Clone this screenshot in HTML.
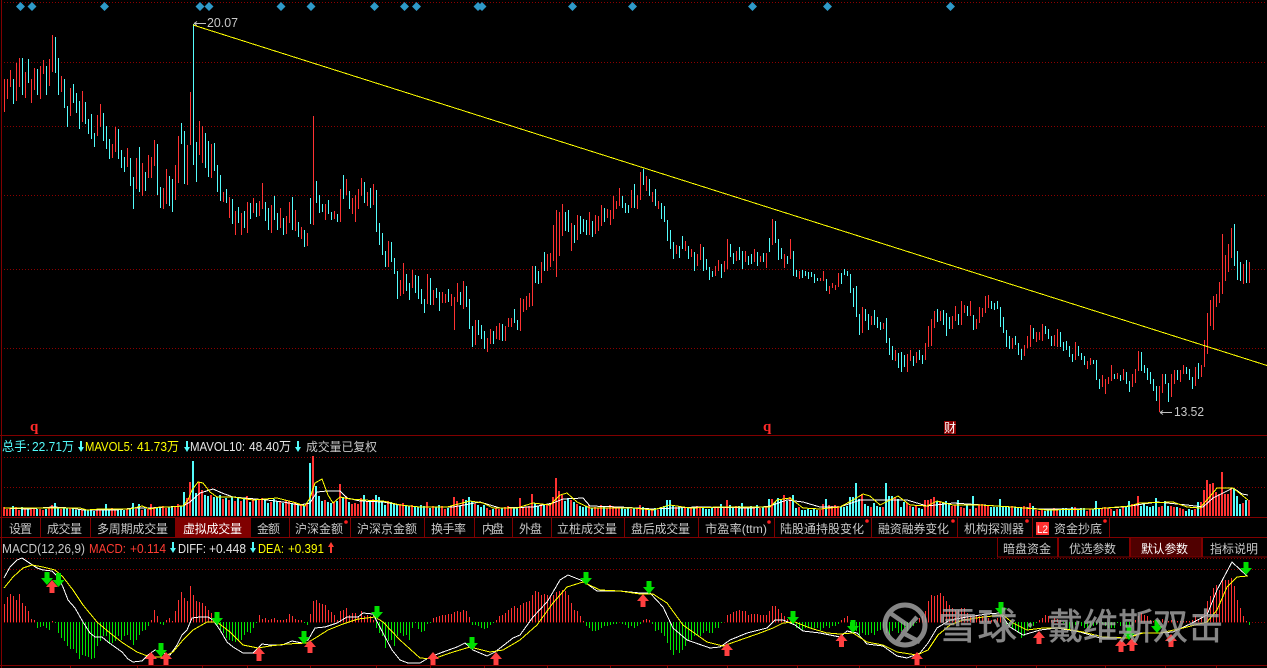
<!DOCTYPE html>
<html lang="zh"><head><meta charset="utf-8"><title>K线图</title>
<style>
html,body{margin:0;padding:0;background:#000;width:1267px;height:668px;overflow:hidden}
svg{display:block;position:absolute;left:0;top:0}
text{font-family:"Liberation Sans","Noto Sans CJK SC",sans-serif;font-size:12px;fill:#c8c8c8}
.h{font-size:13px}
.c{fill:#54fcfc}.y{fill:#ffff00}.w{fill:#e6e6e6}.r{fill:#ff3c32}
</style></head><body>
<svg width="1267" height="668" viewBox="0 0 1267 668" xmlns="http://www.w3.org/2000/svg">
<g fill="none" stroke="#8c0000" stroke-width="1" stroke-dasharray="1 2" shape-rendering="crispEdges">
<path d="M4 2.5H1267M4 62.5H1267M4 126.5H1267M4 195.5H1267M4 269.5H1267M4 348.5H1267M4 457.5H1267M4 487.5H1267M4 558.5H1267M4 569.5H1267M4 622.5H1267"/>
</g>
<g fill="none" stroke="#800000" stroke-width="1" shape-rendering="crispEdges">
<path d="M1.5 0V668M0 435.5H1267M0 517.5H1267M0 537.5H1267M0 665.5H1267"/>
<path d="M70.5 666v2M137.5 666v2M202.5 666v2M247.5 666v2M310.5 666v2M376.5 666v2M430.5 666v2M484.5 666v2M547.5 666v2M610.5 666v2M667.5 666v2M727.5 666v2M797.5 666v2M859.5 666v2M925.5 666v2M976.5 666v2M1036.5 666v2M1105.5 666v2M1165.5 666v2M1216.5 666v2"/>
</g>
<path fill="#2e9ac9" d="M20.5 2l4.5 4.5-4.5 4.5-4.5-4.5zM32 2l4.5 4.5-4.5 4.5-4.5-4.5zM104.5 2l4.5 4.5-4.5 4.5-4.5-4.5zM200 2l4.5 4.5-4.5 4.5-4.5-4.5zM209 2l4.5 4.5-4.5 4.5-4.5-4.5zM281 2l4.5 4.5-4.5 4.5-4.5-4.5zM311 2l4.5 4.5-4.5 4.5-4.5-4.5zM374.5 2l4.5 4.5-4.5 4.5-4.5-4.5zM404.5 2l4.5 4.5-4.5 4.5-4.5-4.5zM416.5 2l4.5 4.5-4.5 4.5-4.5-4.5zM478 2l4.5 4.5-4.5 4.5-4.5-4.5zM482 2l4.5 4.5-4.5 4.5-4.5-4.5zM572.5 2l4.5 4.5-4.5 4.5-4.5-4.5zM632.5 2l4.5 4.5-4.5 4.5-4.5-4.5zM752.5 2l4.5 4.5-4.5 4.5-4.5-4.5zM827.5 2l4.5 4.5-4.5 4.5-4.5-4.5zM950.5 2l4.5 4.5-4.5 4.5-4.5-4.5z"/>

<!-- candles red -->
<path fill="none" stroke="#ff3232" stroke-width="1" shape-rendering="crispEdges" d="M4.5 79V112M7.5 79V99M10.5 70V87M16.5 63V101M19.5 58V87M25.5 72V98M31.5 79V103M34.5 68V90M40.5 66V99M43.5 60V74M49.5 59V86M52.5 35V72M61.5 76V92M70.5 88V116M82.5 91V122M97.5 115V136M100.5 104V127M112.5 144V158M115.5 127V152M127.5 148V167M136.5 158V189M142.5 163V196M148.5 155V178M151.5 157V178M154.5 140V166M163.5 188V209M166.5 169V204M175.5 165V200M178.5 136V183M187.5 145V185M190.5 92V145M199.5 121V155M202.5 126V163M211.5 144V178M223.5 192V202M229.5 197V218M235.5 211V235M241.5 213V235M247.5 202V233M253.5 198V213M259.5 201V216M262.5 183V209M271.5 205V233M280.5 208V228M286.5 216V234M289.5 202V223M295.5 210V231M301.5 227V239M307.5 233V246M313.5 116V225M325.5 204V220M334.5 211V219M340.5 189V222M346.5 179V195M352.5 198V214M355.5 195V222M358.5 189V209M361.5 178V196M367.5 192V206M373.5 184V205M388.5 241V267M400.5 280V296M403.5 263V294M412.5 270V288M427.5 274V304M433.5 290V305M442.5 292V303M445.5 294V303M451.5 294V306M454.5 297V330M457.5 283V302M463.5 281V309M475.5 320V345M487.5 338V352M490.5 329V344M496.5 326V339M499.5 323V340M505.5 326V341M508.5 318V327M511.5 318V327M520.5 298V331M523.5 299V312M526.5 296V310M529.5 293V307M532.5 266V306M541.5 262V283M547.5 254V271M550.5 253V267M553.5 225V261M556.5 210V277M559.5 212V256M562.5 204V236M571.5 223V251M577.5 215V240M589.5 212V235M595.5 215V234M598.5 216V231M601.5 205V226M607.5 209V218M610.5 210V225M613.5 196V219M616.5 201V209M619.5 188V206M631.5 190V208M637.5 195V209M640.5 172V200M646.5 176V191M652.5 192V202M658.5 201V209M676.5 245V254M685.5 241V251M691.5 249V257M697.5 254V266M700.5 244V260M715.5 266V276M718.5 260V271M724.5 261V272M727.5 239V269M736.5 251V261M745.5 251V262M754.5 249V262M760.5 256V262M766.5 253V268M772.5 219V245M784.5 254V268M790.5 239V259M799.5 271V279M820.5 278V281M823.5 271V281M829.5 286V294M832.5 283V288M835.5 285V290M838.5 273V287M862.5 307V333M871.5 316V325M883.5 323V329M895.5 350V361M907.5 354V372M910.5 350V361M916.5 352V363M925.5 343V360M928.5 326V347M931.5 319V346M934.5 311V328M940.5 311V321M952.5 316V329M955.5 306V321M961.5 301V325M964.5 305V313M970.5 301V316M976.5 319V329M979.5 307V323M982.5 308V317M985.5 296V313M988.5 295V308M1012.5 338V349M1024.5 345V356M1027.5 336V348M1030.5 325V347M1036.5 332V342M1039.5 332V340M1042.5 324V341M1054.5 335V346M1057.5 329V347M1075.5 342V360M1087.5 361V369M1090.5 358V365M1102.5 375V387M1105.5 379V394M1108.5 377V384M1111.5 365V381M1117.5 373V379M1123.5 369V380M1132.5 374V387M1135.5 369V383M1138.5 351V371M1159.5 386V412M1162.5 374V393M1171.5 374V397M1174.5 370V384M1180.5 370V382M1183.5 365V374M1195.5 367V386M1201.5 365V377M1204.5 340V367M1207.5 313V354M1210.5 300V326M1213.5 296V330M1216.5 294V307M1219.5 282V303M1222.5 234V294M1225.5 255V281M1228.5 244V272M1231.5 228V258M1243.5 264V284M1249.5 262V283"/>
<!-- candles cyan -->
<path fill="none" stroke="#54fcfc" stroke-width="1" shape-rendering="crispEdges" d="M13.5 79V104M22.5 58V95M28.5 59V83M37.5 69V95M46.5 66V95M55.5 37V73M58.5 58V95M64.5 79V108M67.5 106V127M73.5 84V103M76.5 93V113M79.5 101V129M85.5 102V124M88.5 119V134M91.5 114V139M94.5 133V147M103.5 113V141M106.5 126V149M109.5 139V159M118.5 129V159M121.5 150V168M124.5 157V172M130.5 158V186M133.5 177V209M139.5 147V192M145.5 172V191M157.5 144V195M160.5 187V208M169.5 176V206M172.5 179V212M181.5 123V144M184.5 131V184M193.5 24V165M196.5 142V182M205.5 133V168M208.5 141V177M214.5 143V171M217.5 165V192M220.5 175V201M226.5 189V203M232.5 199V224M238.5 207V223M244.5 211V228M250.5 203V219M256.5 203V217M265.5 202V221M268.5 208V230M274.5 196V220M277.5 213V230M283.5 218V235M292.5 197V230M298.5 222V237M304.5 230V247M310.5 198V224M316.5 181V203M319.5 195V213M322.5 204V212M328.5 200V214M331.5 212V220M337.5 214V222M343.5 175V199M349.5 191V209M364.5 182V203M370.5 188V208M376.5 190V232M379.5 223V245M382.5 233V255M385.5 251V267M391.5 242V262M394.5 258V274M397.5 271V299M406.5 274V291M409.5 283V300M415.5 275V293M418.5 276V299M421.5 289V304M424.5 299V313M430.5 278V305M436.5 288V298M439.5 292V311M448.5 289V302M460.5 292V305M466.5 286V307M469.5 299V329M472.5 326V347M478.5 320V335M481.5 325V339M484.5 331V349M493.5 331V344M502.5 324V341M514.5 309V323M517.5 320V330M535.5 266V283M538.5 271V284M544.5 252V271M565.5 212V231M568.5 210V232M574.5 225V243M580.5 216V234M583.5 219V232M586.5 220V235M592.5 221V237M604.5 208V222M622.5 196V208M625.5 203V213M628.5 205V213M634.5 184V208M643.5 169V185M649.5 179V196M655.5 189V206M661.5 203V219M664.5 206V222M667.5 220V241M670.5 230V249M673.5 242V259M679.5 246V258M682.5 236V249M688.5 246V259M694.5 252V271M703.5 247V271M706.5 259V270M709.5 267V280M712.5 271V277M721.5 264V278M730.5 244V257M733.5 253V264M739.5 247V260M742.5 251V269M748.5 256V265M751.5 254V264M757.5 252V266M763.5 253V262M769.5 238V252M775.5 221V243M778.5 239V260M781.5 248V259M787.5 256V264M793.5 251V276M796.5 270V277M802.5 270V278M805.5 271V276M808.5 272V279M811.5 272V277M814.5 274V283M817.5 278V281M826.5 279V291M841.5 273V284M844.5 269V275M847.5 271V276M850.5 274V293M853.5 288V307M856.5 286V317M859.5 314V335M865.5 309V321M868.5 314V330M874.5 310V325M877.5 317V328M880.5 322V330M886.5 318V343M889.5 338V355M892.5 346V360M898.5 353V368M901.5 352V372M904.5 355V367M913.5 356V366M919.5 350V360M922.5 355V364M937.5 309V322M943.5 310V325M946.5 313V336M949.5 317V329M958.5 314V325M967.5 306V316M973.5 315V330M991.5 301V309M994.5 303V310M997.5 301V309M1000.5 307V327M1003.5 317V333M1006.5 330V347M1009.5 336V349M1015.5 336V345M1018.5 343V355M1021.5 349V360M1033.5 328V339M1045.5 326V334M1048.5 329V339M1051.5 336V346M1060.5 332V347M1063.5 342V351M1066.5 341V350M1069.5 346V357M1072.5 354V362M1078.5 346V356M1081.5 353V360M1084.5 356V365M1093.5 360V364M1096.5 360V380M1099.5 379V389M1114.5 374V379M1120.5 375V381M1126.5 372V384M1129.5 381V392M1141.5 352V371M1144.5 365V373M1147.5 368V380M1150.5 372V384M1153.5 379V391M1156.5 386V401M1165.5 374V384M1168.5 383V402M1177.5 370V380M1186.5 367V374M1189.5 369V380M1192.5 377V389M1198.5 363V379M1234.5 224V266M1237.5 251V280M1240.5 262V281M1246.5 260V283"/>

<!-- trend line -->
<path d="M193 25L1267 365.5" stroke="#ffff00" stroke-width="1" fill="none" shape-rendering="crispEdges"/>
<path d="M194 23.5H206M194 23.5l3-2M194 23.5l3 2M1160 412.5H1172M1160 412.5l3-2M1160 412.5l3 2" stroke="#c0c0c0" stroke-width="1" fill="none"/>
<text x="207" y="27" class="h" textLength="31" lengthAdjust="spacingAndGlyphs">20.07</text>
<text x="1174" y="416" class="h" textLength="30" lengthAdjust="spacingAndGlyphs">13.52</text>
<text x="30" y="431" style="font-family:'Liberation Serif',serif;font-size:15px;font-weight:bold;fill:#ff2a2a">q</text>
<text x="763" y="431" style="font-family:'Liberation Serif',serif;font-size:15px;font-weight:bold;fill:#ff2a2a">q</text>
<rect x="944" y="421" width="12" height="13" fill="#8b0000"/>
<text x="944" y="432" style="fill:#fff;font-size:12px">财</text>

<!-- volume header -->
<text x="2" y="451" class="c h" textLength="28" lengthAdjust="spacingAndGlyphs">总手:</text>
<text x="32" y="451" class="c h" textLength="42" lengthAdjust="spacingAndGlyphs">22.71万</text>
<text x="85" y="451" class="y h" textLength="48" lengthAdjust="spacingAndGlyphs">MAVOL5:</text>
<text x="137" y="451" class="y h" textLength="42" lengthAdjust="spacingAndGlyphs">41.73万</text>
<text x="190" y="451" class="w h" textLength="55" lengthAdjust="spacingAndGlyphs">MAVOL10:</text>
<text x="249" y="451" class="w h" textLength="42" lengthAdjust="spacingAndGlyphs">48.40万</text>
<text x="306" y="451" textLength="71" lengthAdjust="spacingAndGlyphs">成交量已复权</text>
<path fill="#54fcfc" d="M80 441h2v6h2l-3 5-3-5h2zM186 441h2v6h2l-3 5-3-5h2zM297 441h2v6h2l-3 5-3-5h2z"/>

<!-- volume red -->
<path fill="none" stroke="#ff3232" stroke-width="2" shape-rendering="crispEdges" d="M4 516v-9M7 516v-7M10 516v-8M16 516v-9M19 516v-6M25 516v-7M31 516v-7M34 516v-8M40 516v-7M43 516v-6M49 516v-8M52 516v-11M61 516v-7M70 516v-8M82 516v-6M97 516v-6M100 516v-6M112 516v-8M115 516v-7M127 516v-7M136 516v-7M142 516v-6M148 516v-7M151 516v-12M154 516v-9M163 516v-10M166 516v-8M175 516v-10M178 516v-12M187 516v-18M190 516v-34M199 516v-34M202 516v-26M211 516v-21M223 516v-17M229 516v-16M235 516v-15M241 516v-15M247 516v-20M253 516v-17M259 516v-16M262 516v-18M271 516v-14M280 516v-14M286 516v-16M289 516v-15M295 516v-14M301 516v-11M307 516v-12M313 516v-60M325 516v-16M334 516v-14M340 516v-32M346 516v-20M352 516v-12M355 516v-13M358 516v-12M361 516v-18M367 516v-14M373 516v-17M388 516v-15M400 516v-12M403 516v-13M412 516v-11M427 516v-14M433 516v-10M442 516v-10M445 516v-7M451 516v-9M454 516v-19M457 516v-15M463 516v-17M475 516v-12M487 516v-8M490 516v-6M496 516v-8M499 516v-7M505 516v-9M508 516v-10M511 516v-8M520 516v-18M523 516v-9M526 516v-9M529 516v-10M532 516v-22M541 516v-12M547 516v-12M550 516v-11M553 516v-19M556 516v-38M559 516v-25M562 516v-21M571 516v-16M577 516v-12M589 516v-11M595 516v-9M598 516v-8M601 516v-11M607 516v-8M610 516v-11M613 516v-10M616 516v-8M619 516v-9M631 516v-7M637 516v-7M640 516v-11M646 516v-8M652 516v-6M658 516v-6M676 516v-9M685 516v-8M691 516v-8M697 516v-10M700 516v-8M715 516v-9M718 516v-8M724 516v-9M727 516v-16M736 516v-10M745 516v-9M754 516v-9M760 516v-8M766 516v-10M772 516v-17M784 516v-21M790 516v-19M799 516v-9M820 516v-6M823 516v-12M829 516v-11M832 516v-10M835 516v-11M838 516v-10M862 516v-22M871 516v-9M883 516v-9M895 516v-19M907 516v-13M910 516v-10M916 516v-10M925 516v-16M928 516v-16M931 516v-17M934 516v-19M940 516v-15M952 516v-10M955 516v-11M961 516v-9M964 516v-8M970 516v-7M976 516v-8M979 516v-12M982 516v-12M985 516v-10M988 516v-10M1012 516v-10M1024 516v-10M1027 516v-9M1030 516v-13M1036 516v-6M1039 516v-5M1042 516v-6M1054 516v-8M1057 516v-7M1075 516v-9M1087 516v-5M1090 516v-7M1102 516v-8M1105 516v-9M1108 516v-8M1111 516v-7M1117 516v-7M1123 516v-9M1132 516v-12M1135 516v-12M1138 516v-20M1159 516v-9M1162 516v-10M1171 516v-10M1174 516v-9M1180 516v-8M1183 516v-7M1195 516v-7M1201 516v-14M1204 516v-26M1207 516v-36M1210 516v-32M1213 516v-33M1216 516v-24M1219 516v-22M1222 516v-44M1225 516v-22M1228 516v-22M1231 516v-28M1243 516v-13M1249 516v-16"/>
<!-- volume cyan -->
<path fill="none" stroke="#54fcfc" stroke-width="2" shape-rendering="crispEdges" d="M13 516v-10M22 516v-9M28 516v-7M37 516v-7M46 516v-7M55 516v-13M58 516v-9M64 516v-9M67 516v-8M73 516v-7M76 516v-6M79 516v-7M85 516v-6M88 516v-6M91 516v-6M94 516v-5M103 516v-7M106 516v-12M109 516v-7M118 516v-6M121 516v-7M124 516v-6M130 516v-8M133 516v-13M139 516v-12M145 516v-7M157 516v-8M160 516v-9M169 516v-9M172 516v-9M181 516v-10M184 516v-24M193 516v-55M196 516v-23M205 516v-21M208 516v-20M214 516v-19M217 516v-19M220 516v-21M226 516v-18M232 516v-19M238 516v-18M244 516v-17M250 516v-14M256 516v-16M265 516v-16M268 516v-13M274 516v-17M277 516v-15M283 516v-13M292 516v-13M298 516v-12M304 516v-10M310 516v-53M316 516v-30M319 516v-20M322 516v-15M328 516v-14M331 516v-13M337 516v-15M343 516v-18M349 516v-14M364 516v-21M370 516v-16M376 516v-21M379 516v-19M382 516v-14M385 516v-11M391 516v-14M394 516v-13M397 516v-11M406 516v-11M409 516v-10M415 516v-10M418 516v-9M421 516v-11M424 516v-10M430 516v-8M436 516v-9M439 516v-11M448 516v-8M460 516v-10M466 516v-16M469 516v-19M472 516v-15M478 516v-11M481 516v-9M484 516v-11M493 516v-7M502 516v-8M514 516v-9M517 516v-9M535 516v-13M538 516v-10M544 516v-11M565 516v-15M568 516v-18M574 516v-14M580 516v-10M583 516v-9M586 516v-10M592 516v-8M604 516v-9M622 516v-8M625 516v-7M628 516v-9M634 516v-8M643 516v-9M649 516v-7M655 516v-8M661 516v-9M664 516v-10M667 516v-16M670 516v-16M673 516v-11M679 516v-10M682 516v-9M688 516v-8M694 516v-9M703 516v-8M706 516v-7M709 516v-7M712 516v-8M721 516v-12M730 516v-11M733 516v-9M739 516v-10M742 516v-13M748 516v-9M751 516v-10M757 516v-11M763 516v-9M769 516v-17M775 516v-14M778 516v-18M781 516v-17M787 516v-15M793 516v-21M796 516v-8M802 516v-6M805 516v-6M808 516v-7M811 516v-6M814 516v-7M817 516v-6M826 516v-17M841 516v-9M844 516v-9M847 516v-10M850 516v-19M853 516v-19M856 516v-33M859 516v-17M865 516v-12M868 516v-10M874 516v-13M877 516v-10M880 516v-9M886 516v-33M889 516v-20M892 516v-20M898 516v-17M901 516v-9M904 516v-14M913 516v-9M919 516v-8M922 516v-7M937 516v-15M943 516v-14M946 516v-15M949 516v-13M958 516v-16M967 516v-11M973 516v-20M991 516v-9M994 516v-9M997 516v-9M1000 516v-17M1003 516v-10M1006 516v-9M1009 516v-9M1015 516v-9M1018 516v-9M1021 516v-8M1033 516v-10M1045 516v-5M1048 516v-6M1051 516v-6M1060 516v-7M1063 516v-8M1066 516v-8M1069 516v-6M1072 516v-9M1078 516v-7M1081 516v-8M1084 516v-8M1093 516v-7M1096 516v-15M1099 516v-8M1114 516v-5M1120 516v-7M1126 516v-10M1129 516v-15M1141 516v-10M1144 516v-13M1147 516v-10M1150 516v-9M1153 516v-10M1156 516v-18M1165 516v-15M1168 516v-10M1177 516v-9M1186 516v-5M1189 516v-7M1192 516v-6M1198 516v-14M1234 516v-27M1237 516v-20M1240 516v-12M1246 516v-16"/>
<!-- volume MA -->
<polyline fill="none" stroke="#ffffff" stroke-width="1" shape-rendering="crispEdges" points="4,508 27,509 53,507 70,508 83,510 117,510 133,508 150,508 167,507 183,506 190,502 200,493 213,489 222,493 233,497 267,500 283,502 300,505 310,503 317,492 327,491 340,491 347,498 360,501 383,502 400,505 420,507 453,507 480,502 500,508 533,507 553,503 563,499 583,498 590,506 620,507 653,509 697,507 753,508 770,506 787,500 803,502 820,507 840,507 860,500 877,500 907,500 927,506 953,503 997,506 1040,509 1090,509 1123,507 1157,502 1187,505 1203,507 1213,498 1233,488 1242,494 1248,495"/>
<polyline fill="none" stroke="#ffff00" stroke-width="1" shape-rendering="crispEdges" points="4,508 33,508 53,508 68,508 80,508 87,510 100,509 113,509 130,509 142,506 150,509 160,507 170,507 183,506 188,500 192,490 198,482 203,483 210,492 217,497 233,497 253,500 277,498 293,502 305,506 310,498 315,483 322,479 328,495 333,503 340,497 350,499 363,500 383,501 400,505 420,507 447,507 470,501 483,503 493,508 517,508 533,503 550,505 560,495 567,493 577,502 590,508 610,508 633,508 653,510 670,505 690,508 720,507 737,507 757,507 770,507 777,500 790,498 803,508 820,509 840,507 853,500 863,494 870,496 880,505 898,496 910,505 927,506 937,501 953,505 980,505 1013,507 1047,510 1093,509 1130,506 1140,503 1173,502 1187,507 1200,508 1207,500 1217,488 1233,488 1248,500"/>

<!-- tabs -->
<rect x="176" y="518" width="74" height="19" fill="#800000"/>
<path fill="none" stroke="#800000" stroke-width="1" shape-rendering="crispEdges" d="M40.5 518V537M90.5 518V537M175.5 518V537M250.5 518V537M289.5 518V537M350.5 518V537M424.5 518V537M474.5 518V537M512.5 518V537M551.5 518V537M624.5 518V537M698.5 518V537M774.5 518V537M871.5 518V537M957.5 518V537M1032.5 518V537M1109.5 518V537"/>
<text x="9" y="533" textLength="23">设置</text>
<text x="47" y="533" textLength="35">成交量</text>
<text x="97" y="533" textLength="71">多周期成交量</text>
<text x="183" y="533" textLength="59" style="fill:#fff">虚拟成交量</text>
<text x="257" y="533" textLength="23">金额</text>
<text x="295" y="533" textLength="48">沪深金额</text>
<text x="357" y="533" textLength="60">沪深京金额</text>
<text x="431" y="533" textLength="35">换手率</text>
<text x="482" y="533" textLength="22">内盘</text>
<text x="519" y="533" textLength="23">外盘</text>
<text x="557" y="533" textLength="60">立桩成交量</text>
<text x="631" y="533" textLength="59">盘后成交量</text>
<text x="705" y="533" textLength="62" lengthAdjust="spacingAndGlyphs">市盈率(ttm)</text>
<text x="780" y="533" textLength="84">陆股通持股变化</text>
<text x="878" y="533" textLength="71">融资融券变化</text>
<text x="964" y="533" textLength="60">机构探测器</text>
<rect x="1036" y="522" width="13" height="13" fill="#ff3030"/>
<text x="1037" y="533" style="fill:#fff;font-size:11px" textLength="11" lengthAdjust="spacingAndGlyphs">L2</text>
<text x="1054" y="533" textLength="48">资金抄底</text>
<g fill="#ff1e1e"><circle cx="346" cy="522" r="1.8"/><circle cx="769" cy="522" r="1.8"/><circle cx="867" cy="521" r="1.8"/><circle cx="953" cy="521" r="1.8"/><circle cx="1027" cy="521" r="1.8"/><circle cx="1105" cy="521" r="1.8"/></g>

<!-- MACD header -->
<text x="2" y="553" class="h" textLength="83" lengthAdjust="spacingAndGlyphs">MACD(12,26,9)</text>
<text x="89" y="553" class="r h" textLength="37" lengthAdjust="spacingAndGlyphs">MACD:</text>
<text x="130" y="553" class="r h" textLength="36" lengthAdjust="spacingAndGlyphs">+0.114</text>
<text x="178" y="553" class="w h" textLength="28" lengthAdjust="spacingAndGlyphs">DIFF:</text>
<text x="209" y="553" class="w h" textLength="37" lengthAdjust="spacingAndGlyphs">+0.448</text>
<text x="258" y="553" class="y h" textLength="26" lengthAdjust="spacingAndGlyphs">DEA:</text>
<text x="288" y="553" class="y h" textLength="36" lengthAdjust="spacingAndGlyphs">+0.391</text>
<path fill="#54fcfc" d="M172 542h2v6h2l-3 5-3-5h2zM252 542h2v6h2l-3 5-3-5h2z"/>
<path fill="#ff3c32" d="M330 553h2v-6h2l-3-5-3 5h2z"/>

<!-- buttons -->
<rect x="1130" y="538" width="71" height="19" fill="#500000"/>
<path fill="none" stroke="#800000" stroke-width="1" shape-rendering="crispEdges" d="M997.5 538V557H1267M1057.5 538V557M1058.5 538V557M1129.5 538V557M1130.5 538V557M1201.5 538V557M1202.5 538V557"/>
<text x="1003" y="553" textLength="48">暗盘资金</text>
<text x="1069" y="553" textLength="47">优选参数</text>
<text x="1141" y="553" textLength="47" style="fill:#fff">默认参数</text>
<text x="1210" y="553" textLength="48">指标说明</text>

<!-- MACD red hist -->
<path fill="none" stroke="#ff3232" stroke-width="1" shape-rendering="crispEdges" d="M4.5 622v-18M7.5 622v-25M10.5 622v-28M13.5 622v-26M16.5 622v-22M19.5 622v-28M22.5 622v-19M25.5 622v-16M28.5 622v-11M31.5 622v-3M34.5 622v-2M52.5 622v-1M151.5 622v-2M154.5 622v-12M157.5 622v-6M166.5 622v-2M169.5 622v-4M172.5 622v-1M175.5 622v-11M178.5 622v-22M181.5 622v-30M184.5 622v-24M187.5 622v-21M190.5 622v-36M193.5 622v-27M196.5 622v-21M199.5 622v-20M202.5 622v-19M205.5 622v-16M208.5 622v-12M211.5 622v-9M214.5 622v-2M259.5 622v-7M262.5 622v-3M265.5 622v-4M268.5 622v-2M271.5 622v-3M274.5 622v-4M277.5 622v-2M280.5 622v-2M283.5 622v-2M286.5 622v-3M289.5 622v-8M292.5 622v-6M295.5 622v-3M298.5 622v-2M301.5 622v-2M310.5 622v-8M313.5 622v-21M316.5 622v-22M319.5 622v-19M322.5 622v-18M325.5 622v-17M328.5 622v-12M331.5 622v-10M334.5 622v-7M337.5 622v-2M340.5 622v-11M343.5 622v-12M346.5 622v-14M349.5 622v-7M352.5 622v-9M355.5 622v-9M358.5 622v-6M361.5 622v-11M364.5 622v-6M367.5 622v-7M370.5 622v-6M373.5 622v-2M433.5 622v-4M436.5 622v-5M439.5 622v-6M442.5 622v-7M445.5 622v-7M448.5 622v-8M451.5 622v-8M454.5 622v-10M457.5 622v-11M460.5 622v-10M463.5 622v-12M466.5 622v-11M469.5 622v-5M496.5 622v-2M499.5 622v-6M502.5 622v-7M505.5 622v-9M508.5 622v-12M511.5 622v-14M514.5 622v-16M517.5 622v-14M520.5 622v-17M523.5 622v-19M526.5 622v-20M529.5 622v-21M532.5 622v-27M535.5 622v-31M538.5 622v-30M541.5 622v-27M544.5 622v-28M547.5 622v-27M550.5 622v-26M553.5 622v-27M556.5 622v-30M559.5 622v-31M562.5 622v-32M565.5 622v-31M568.5 622v-27M571.5 622v-19M574.5 622v-12M577.5 622v-11M580.5 622v-6M583.5 622v-1M643.5 622v-2M646.5 622v-3M649.5 622v-2M727.5 622v-7M730.5 622v-8M733.5 622v-10M736.5 622v-11M739.5 622v-12M742.5 622v-11M745.5 622v-11M748.5 622v-7M751.5 622v-8M754.5 622v-8M757.5 622v-8M760.5 622v-7M763.5 622v-7M766.5 622v-7M769.5 622v-11M772.5 622v-16M775.5 622v-16M778.5 622v-13M781.5 622v-9M784.5 622v-6M787.5 622v-3M790.5 622v-1M841.5 622v-2M844.5 622v-4M847.5 622v-6M919.5 622v-4M922.5 622v-6M925.5 622v-11M928.5 622v-21M931.5 622v-27M934.5 622v-26M937.5 622v-27M940.5 622v-29M943.5 622v-26M946.5 622v-21M949.5 622v-17M952.5 622v-14M955.5 622v-12M958.5 622v-12M961.5 622v-14M964.5 622v-14M967.5 622v-9M970.5 622v-7M973.5 622v-6M976.5 622v-7M979.5 622v-6M982.5 622v-6M985.5 622v-6M988.5 622v-4M991.5 622v-2M994.5 622v-2M997.5 622v-4M1000.5 622v-6M1039.5 622v-2M1042.5 622v-4M1045.5 622v-7M1048.5 622v-6M1051.5 622v-2M1054.5 622v-4M1057.5 622v-3M1060.5 622v-2M1135.5 622v-2M1138.5 622v-6M1141.5 622v-9M1144.5 622v-7M1147.5 622v-6M1150.5 622v-2M1153.5 622v-1M1156.5 622v-1M1159.5 622v-2M1162.5 622v-3M1165.5 622v-1M1168.5 622v-1M1171.5 622v-2M1174.5 622v-2M1177.5 622v-1M1180.5 622v-1M1183.5 622v-1M1186.5 622v-1M1189.5 622v-1M1192.5 622v-2M1195.5 622v-6M1198.5 622v-2M1201.5 622v-6M1204.5 622v-9M1207.5 622v-21M1210.5 622v-26M1213.5 622v-34M1216.5 622v-37M1219.5 622v-32M1222.5 622v-42M1225.5 622v-42M1228.5 622v-42M1231.5 622v-44M1234.5 622v-36M1237.5 622v-22M1240.5 622v-14M1243.5 622v-6M1246.5 622v-1"/>
<!-- MACD green hist -->
<path fill="none" stroke="#00e600" stroke-width="1" shape-rendering="crispEdges" d="M37.5 622v6M40.5 622v5M43.5 622v4M46.5 622v6M49.5 622v8M55.5 622v1M58.5 622v11M61.5 622v16M64.5 622v19M67.5 622v24M70.5 622v27M73.5 622v27M76.5 622v31M79.5 622v37M82.5 622v33M85.5 622v34M88.5 622v35M91.5 622v37M94.5 622v36M97.5 622v24M100.5 622v19M103.5 622v14M106.5 622v14M109.5 622v22M112.5 622v21M115.5 622v19M118.5 622v14M121.5 622v18M124.5 622v14M127.5 622v13M130.5 622v18M133.5 622v23M136.5 622v18M139.5 622v13M142.5 622v9M145.5 622v8M148.5 622v4M160.5 622v2M163.5 622v3M217.5 622v3M220.5 622v8M223.5 622v11M226.5 622v16M229.5 622v18M232.5 622v19M235.5 622v20M238.5 622v19M241.5 622v18M244.5 622v13M247.5 622v10M250.5 622v11M253.5 622v6M256.5 622v1M304.5 622v1M307.5 622v3M376.5 622v6M379.5 622v11M382.5 622v14M385.5 622v26M388.5 622v19M391.5 622v18M394.5 622v24M397.5 622v14M400.5 622v11M403.5 622v14M406.5 622v13M409.5 622v18M412.5 622v6M415.5 622v1M418.5 622v7M421.5 622v10M424.5 622v9M427.5 622v2M430.5 622v1M472.5 622v3M475.5 622v3M478.5 622v4M481.5 622v6M484.5 622v7M487.5 622v6M490.5 622v3M493.5 622v1M586.5 622v4M589.5 622v6M592.5 622v9M595.5 622v9M598.5 622v8M601.5 622v6M604.5 622v4M607.5 622v4M610.5 622v3M613.5 622v2M616.5 622v2M622.5 622v2M625.5 622v3M628.5 622v6M631.5 622v4M634.5 622v6M637.5 622v4M640.5 622v2M652.5 622v2M655.5 622v9M658.5 622v8M661.5 622v11M664.5 622v14M667.5 622v21M670.5 622v28M673.5 622v33M676.5 622v28M679.5 622v31M682.5 622v28M685.5 622v24M688.5 622v19M691.5 622v18M694.5 622v14M697.5 622v13M700.5 622v14M703.5 622v11M706.5 622v9M709.5 622v11M712.5 622v11M715.5 622v6M718.5 622v6M721.5 622v1M793.5 622v3M796.5 622v6M799.5 622v6M802.5 622v8M805.5 622v6M808.5 622v6M811.5 622v6M814.5 622v6M817.5 622v6M820.5 622v8M823.5 622v6M826.5 622v4M829.5 622v6M832.5 622v4M835.5 622v4M838.5 622v2M850.5 622v6M853.5 622v6M856.5 622v9M859.5 622v13M862.5 622v11M865.5 622v13M868.5 622v13M871.5 622v11M874.5 622v13M877.5 622v9M880.5 622v8M883.5 622v6M886.5 622v11M889.5 622v13M892.5 622v9M895.5 622v6M898.5 622v11M901.5 622v9M904.5 622v6M907.5 622v9M910.5 622v6M913.5 622v4M916.5 622v1M1003.5 622v1M1006.5 622v3M1009.5 622v4M1012.5 622v6M1015.5 622v8M1018.5 622v11M1021.5 622v16M1024.5 622v14M1027.5 622v8M1030.5 622v6M1033.5 622v4M1036.5 622v1M1063.5 622v1M1066.5 622v6M1069.5 622v8M1072.5 622v6M1075.5 622v3M1078.5 622v2M1081.5 622v4M1084.5 622v6M1087.5 622v6M1090.5 622v6M1093.5 622v4M1096.5 622v3M1099.5 622v1M1102.5 622v2M1105.5 622v4M1108.5 622v6M1111.5 622v6M1114.5 622v6M1117.5 622v1M1120.5 622v4M1123.5 622v4M1126.5 622v6M1129.5 622v6M1132.5 622v4M1249.5 622v3"/>
<!-- MACD lines -->
<polyline fill="none" stroke="#ffffff" stroke-width="1" shape-rendering="crispEdges" points="4,578 10,567 17,560 22,558 28,562 37,568 43,570 52,571 58,577 63,587 68,600 75,608 83,622 90,633 95,637 102,637 108,642 115,647 122,652 128,659 133,662 142,661 148,655 155,650 163,653 170,655 177,645 182,635 187,630 192,618 200,617 208,617 213,620 220,630 227,642 233,647 243,653 253,653 262,644 270,645 282,645 292,641 302,643 308,640 315,628 325,627 337,623 347,617 358,617 363,613 373,614 383,633 392,650 400,660 408,663 420,663 430,657 443,652 457,647 465,643 473,650 487,656 495,652 513,638 520,635 533,617 547,602 553,592 560,580 568,575 583,581 597,591 620,591 640,593 650,593 663,607 673,628 687,640 710,648 720,647 730,640 747,633 767,628 775,620 783,620 795,625 803,631 820,633 840,637 847,631 857,633 867,644 883,646 897,656 907,658 920,653 928,643 937,628 950,620 967,617 987,614 1000,613 1010,627 1023,635 1040,630 1057,628 1080,632 1100,638 1127,638 1140,633 1160,633 1173,632 1190,624 1207,615 1217,590 1232,562 1247,576"/>
<polyline fill="none" stroke="#ffff00" stroke-width="1" shape-rendering="crispEdges" points="4,588 13,577 23,568 32,565 43,567 55,570 63,577 73,590 83,605 97,622 110,633 123,643 137,652 150,657 163,657 173,652 183,640 193,630 207,622 217,622 230,632 243,645 258,648 270,646 287,644 307,643 317,637 328,630 343,624 358,619 375,617 383,622 400,640 420,658 433,659 450,653 470,647 490,652 503,650 520,640 537,625 553,603 567,587 583,582 600,590 620,591 640,594 653,594 667,603 683,625 707,642 723,646 740,640 760,633 773,628 783,623 795,622 810,628 827,633 840,634 853,633 867,642 883,645 897,652 917,655 928,650 938,635 950,625 963,620 983,617 1003,615 1013,623 1027,630 1043,628 1060,628 1083,632 1103,637 1127,638 1143,633 1160,633 1183,628 1207,622 1217,610 1227,587 1237,577 1248,576"/>
<!-- green arrows -->
<path fill="#00e000" d="M44.5 572h5v6h3.500l-6 7-6-7h3.500zM56 573h5v7h3.500l-6 7-6-7h3.500zM158.500 643h5v7h3.500l-6 7-6-7h3.500zM214.500 612h5v6h3.500l-6 7-6-7h3.500zM301.500 631h5v6h3.500l-6 7-6-7h3.500zM374.500 606h5v6h3.500l-6 7-6-7h3.500zM469.500 637h5v6h3.500l-6 7-6-7h3.500zM583.500 572h5v6h3.500l-6 7-6-7h3.500zM646.500 581h5v6h3.500l-6 7-6-7h3.500zM790.500 611h5v6h3.500l-6 7-6-7h3.500zM850.500 620h5v6h3.500l-6 7-6-7h3.500zM998.500 602h5v6h3.500l-6 7-6-7h3.500zM1126.500 627h5v6h3.500l-6 7-6-7h3.500zM1154.500 620h5v6h3.500l-6 7-6-7h3.500zM1243.500 562h5v6h3.500l-6 7-6-7h3.500z"/>
<!-- red arrows -->
<path fill="#ff4040" d="M52 580l6 7h-3.500v6h-5v-6h-3.500zM151 652l6 7h-3.500v6h-5v-6h-3.500zM166 652l6 7h-3.500v6h-5v-6h-3.500zM259 647l6 7h-3.500v7h-5v-7h-3.500zM310 640l6 7h-3.500v6h-5v-6h-3.500zM433 652l6 7h-3.500v6h-5v-6h-3.500zM496 652l6 7h-3.500v6h-5v-6h-3.500zM643 594l6 7h-3.500v6h-5v-6h-3.500zM727 643l6 7h-3.500v6h-5v-6h-3.500zM841.500 634l6 7h-3.500v6h-5v-6h-3.500zM917 652l6 7h-3.500v6h-5v-6h-3.500zM1039 631l6 7h-3.500v6h-5v-6h-3.500zM1121 639l6 7h-3.500v6h-5v-6h-3.500zM1132 638l6 7h-3.500v6h-5v-6h-3.500zM1171 634l6 7h-3.500v6h-5v-6h-3.500z"/>

<!-- watermark -->
<g opacity=".8">
<circle cx="905" cy="625" r="20" fill="none" stroke="#a8a8a8" stroke-width="5"/>
<path d="M890 613L909 626L897 642M917 617L903 633L920 642" fill="none" stroke="#a8a8a8" stroke-width="4.500" stroke-linejoin="round"/>
<text x="938" y="639" style="font-size:37px;fill:#a8a8a8;stroke:#a8a8a8;stroke-width:.6px;font-family:'Noto Sans CJK SC',sans-serif" textLength="79" lengthAdjust="spacingAndGlyphs">雪球</text>
<circle cx="1030" cy="625" r="2.200" fill="#a8a8a8"/>
<text x="1048" y="639" style="font-size:36px;fill:#a8a8a8;stroke:#a8a8a8;stroke-width:.6px;font-family:'Noto Sans CJK SC',sans-serif" textLength="175" lengthAdjust="spacingAndGlyphs">戴维斯双击</text>
</g>
</svg>
</body></html>
